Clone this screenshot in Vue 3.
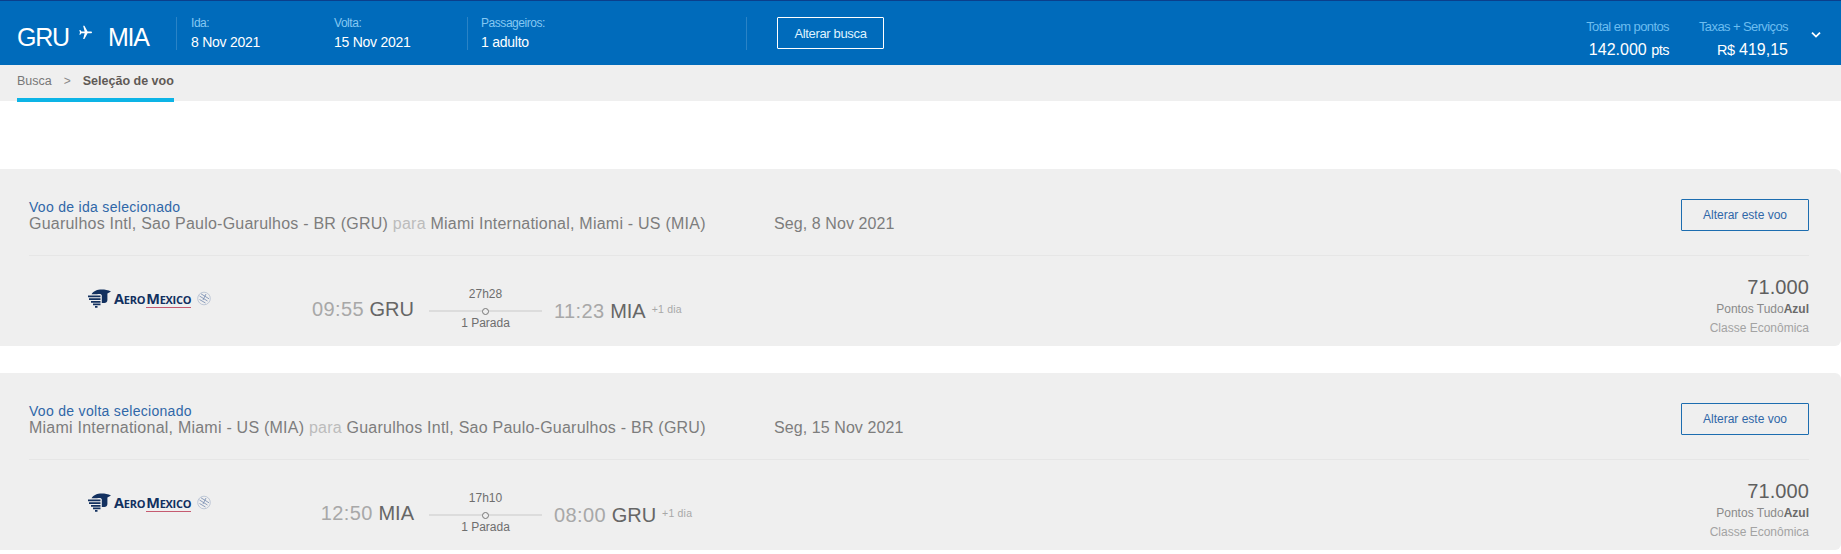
<script setup>
const flights = [
  { title: 'Voo de ida selecionado', from: 'Guarulhos Intl, Sao Paulo-Guarulhos - BR (GRU)', to: 'Miami International, Miami - US (MIA)', date: 'Seg, 8 Nov 2021', dep: '09:55', depC: 'GRU', dur: '27h28', arr: '11:23', arrC: 'MIA' },
  { title: 'Voo de volta selecionado', from: 'Miami International, Miami - US (MIA)', to: 'Guarulhos Intl, Sao Paulo-Guarulhos - BR (GRU)', date: 'Seg, 15 Nov 2021', dep: '12:50', depC: 'MIA', dur: '17h10', arr: '08:00', arrC: 'GRU' }
]
</script>

<template>
  <div class="page">
    <header class="top">
      <div class="route">
        <span>GRU</span>
        <svg class="plane" width="16" height="16" viewBox="0 0 24 24"><path fill="#fff" d="M21 12.6c0-.9-.8-1.4-1.6-1.4h-5L9.6 2.5H7.7l2.3 8.7H5.2L3.4 9H2l1 3.6L2 16h1.4l1.8-2.2H10l-2.3 8.7h1.9l4.8-8.7h5c.8 0 1.6-.5 1.6-1.2z" /></svg>
        <span>MIA</span>
      </div>
      <div class="info first"><small>Ida:</small><b>8 Nov 2021</b></div>
      <div class="info second"><small>Volta:</small><b>15 Nov 2021</b></div>
      <div class="info third"><small>Passageiros:</small><b>1 adulto</b></div>
      <div class="divider"></div>
      <button class="change-search">Alterar busca</button>
      <div class="totals">
        <div class="total pts"><small>Total em pontos</small><b>142.000 <i>pts</i></b></div>
        <div class="total tax"><small>Taxas + Serviços</small><b><i>R$</i> 419,15</b></div>
        <svg class="chev" width="10" height="8" viewBox="0 0 10 8"><path d="M1 1.6l4 4 4-4" fill="none" stroke="#fff" stroke-width="1.8" /></svg>
      </div>
    </header>
    <nav class="crumbs">
      <div class="crumb-inner"><span class="c1">Busca</span><span class="sep">&gt;</span><strong>Seleção de voo</strong></div>
    </nav>
    <main class="cards">
      <section v-for="f in flights" :key="f.title" class="card">
        <div class="card-head">
          <div class="head-text">
            <div class="title">{{ f.title }}</div>
            <div class="line"><span class="places">{{ f.from }} <em>para</em> {{ f.to }}</span><span class="date">{{ f.date }}</span></div>
          </div>
          <button class="change-flight">Alterar este voo</button>
        </div>
        <div class="card-body">
          <div class="logo">
            <svg width="23" height="20" viewBox="0 0 23 20">
              <path fill="#12305f" d="M8 1.500C11 0 18 0 23 2.500l-3.600 2v6.600c0 2-1.400 2.800-3 2.800h-2.600V6.500C13.800 5 12 4.500 9 5.200H3.500C4.500 3.500 6 2.300 8 1.500z" />
              <path fill="#12305f" d="M0 6.500h12.500v1.700H0zM1 9.300h11.500V11H1zM3 12h9.500v1.700H3zM5 14.600h7.500v1.700H5zM7 17h2.500v1.800H7z" />
            </svg>
            <span class="wordmark"><span class="big">A</span>ERO<span class="mex"><span class="big">M</span>EXICO</span></span>
            <svg class="team" width="16" height="16" viewBox="0 0 16 16">
              <circle cx="8" cy="8.500" r="6.300" fill="none" stroke="#a9b6cc" stroke-width=".7" />
              <path d="M3.500 6l8 5M5 3.800l8 5M3.500 9.500l6 3.500M10 4l-3 6" stroke="#7f93b5" stroke-width=".9" fill="none" />
            </svg>
          </div>
          <div class="times">
            <div class="point dep"><span class="t">{{ f.dep }}</span> <span class="c">{{ f.depC }}</span></div>
            <div class="track">
              <span class="dur">{{ f.dur }}</span>
              <div class="rail"><span class="stop"></span></div>
              <span class="stops">1 Parada</span>
            </div>
            <div class="point arr"><span class="t">{{ f.arr }}</span> <span class="c">{{ f.arrC }}</span><span class="plus">+1 dia</span></div>
          </div>
          <div class="price">
            <div class="amount">71.000</div>
            <div class="unit">Pontos Tudo<b>Azul</b></div>
            <div class="cabin">Classe Econômica</div>
          </div>
        </div>
      </section>
    </main>
  </div>
</template>

<style>
html, body { margin: 0; background: #fff; overflow: hidden; }
</style>

<style scoped>
.page { width: 1841px; height: 554px; overflow: hidden; font-family: "Liberation Sans", Arial, sans-serif; color: #666; }
button { font-family: inherit; cursor: pointer; padding: 0; }
.top { height: 64px; background: #006bbb; border-top: 1px solid #0a3f8c; display: flex; align-items: stretch; color: #fff; position: relative; }
.route { width: 176px; box-sizing: border-box; padding-left: 17px; display: flex; align-items: center; font-size: 25px; letter-spacing: -1.2px; }
.route span { line-height: 1; margin-top: 9px; }
.plane { margin: 0 14px 0 9px; transform: translateY(-1px); }
.info { display: flex; flex-direction: column; border-left: 1px solid #2a83c6; height: 33px; margin-top: 16px; padding-left: 14px; }
.info.first { width: 142px; }
.info.second { width: 134px; border-left-color: transparent; padding-left: 0; }
.info.third { width: 265px; padding-left: 13px; margin-left: -1px; }
.info small { font-size: 12px; letter-spacing: -.45px; color: #85c8f2; line-height: 14px; margin-top: -1px; }
.info b { font-weight: 400; font-size: 14px; letter-spacing: -.25px; line-height: 16px; margin-top: 4px; white-space: nowrap; }
.divider { width: 1px; height: 33px; margin-top: 16px; background: #2a83c6; }
.change-search { width: 107px; height: 32px; margin: 16px 0 0 30px; background: transparent; color: #dff2ff; border: 1px solid #fff; border-radius: 1px; font-size: 13px; letter-spacing: -.35px; }
.totals { margin-left: auto; display: flex; position: relative; padding-right: 53px; }
.total { display: flex; flex-direction: column; align-items: flex-end; }
.total small { font-size: 13px; color: #6cbdf0; line-height: 15px; margin-top: 18px; letter-spacing: -.6px; }
.total b { font-weight: 400; font-size: 16px; line-height: 18px; margin-top: 7px; letter-spacing: 0; white-space: nowrap; }
.total i { font-style: normal; font-size: 14.500px; letter-spacing: -.5px; }
.tax { margin-left: 30px; }
.chev { position: absolute; right: 20px; top: 30px; }
.crumbs { height: 36px; background: #efefef; }
.crumb-inner { box-sizing: border-box; width: 174px; height: 36px; padding: 9px 0 0 17px; font-size: 12.500px; line-height: 14px; position: relative; white-space: nowrap; }
.crumb-inner::after { content: ""; position: absolute; left: 17px; right: 0; bottom: -1px; height: 4px; background: #0db4e6; }
.c1 { color: #777; }
.sep { color: #888; margin: 0 12px; font-size: 12px; }
.crumb-inner strong { color: #5f5a56; font-size: 12.500px; }
.cards { padding-top: 68px; display: flex; flex-direction: column; gap: 27px; }
.card { height: 177px; flex: none; box-sizing: border-box; background: #efefef; border-radius: 0 6px 6px 0; padding: 0 32px 0 29px; }
.card-head { height: 87px; box-sizing: border-box; border-bottom: 1px solid #e6e6e6; display: flex; justify-content: space-between; }
.head-text { padding-top: 31px; }
.title { font-size: 14px; line-height: 14px; color: #2f67a8; letter-spacing: .3px; }
.line { font-size: 16px; line-height: 19px; color: #7d7d7d; display: flex; letter-spacing: .23px; }
.places { width: 745px; }
.places em { font-style: normal; color: #bcbcbc; }
.date { letter-spacing: .08px; }
.change-flight { width: 128px; height: 32px; margin-top: 30px; background: transparent; color: #2f67a8; border: 1px solid #1c6db0; border-radius: 1px; font-size: 12px; }
.card-body { display: flex; position: relative; height: 89px; }
.logo { position: absolute; left: 59px; top: 33px; display: flex; align-items: center; height: 20px; }
.wordmark { font-family: "Open Sans", sans-serif; font-weight: 700; font-size: 11px; letter-spacing: -.25px; color: #12305f; margin-left: 3px; line-height: 14px; white-space: nowrap; }
.wordmark .big { font-size: 14.500px; }
.mex { border-bottom: 1px solid #c55a70; margin-left: 1px; }
.team { margin-left: 5px; margin-top: -3px; }
.times { position: absolute; left: 0; top: 0; width: 670px; height: 89px; }
.point { position: absolute; top: 41px; font-size: 20px; line-height: 24px; white-space: nowrap; }
.point .t { color: #a8a8a8; letter-spacing: .4px; }
.point .c { color: #666; }
.dep { right: 285px; }
.arr { left: 525px; }
.plus { font-size: 10.500px; color: #a8a8a8; margin-left: 6px; vertical-align: 5px; letter-spacing: .2px; }
.track { position: absolute; left: 400px; top: 31px; width: 113px; display: flex; flex-direction: column; align-items: center; font-size: 12px; color: #6e6e6e; }
.dur { line-height: 14px; }
.rail { width: 113px; height: 2px; background: #dcdcdc; margin: 9px 0 4px; position: relative; }
.stop { position: absolute; left: 50%; top: 50%; width: 5px; height: 5px; margin: -3.500px 0 0 -3.500px; border: 1px solid #777; border-radius: 50%; background: #efefef; }
.stops { line-height: 14px; }
.price { margin-left: auto; text-align: right; padding-top: 20px; }
.amount { font-size: 20px; line-height: 22px; color: #5f5f5f; letter-spacing: .1px; }
.unit { font-size: 12px; line-height: 14px; color: #8a8a8a; margin-top: 4px; }
.unit b { color: #6a6a6a; }
.cabin { font-size: 12px; line-height: 14px; color: #a3a3a3; margin-top: 5px; }
</style>
